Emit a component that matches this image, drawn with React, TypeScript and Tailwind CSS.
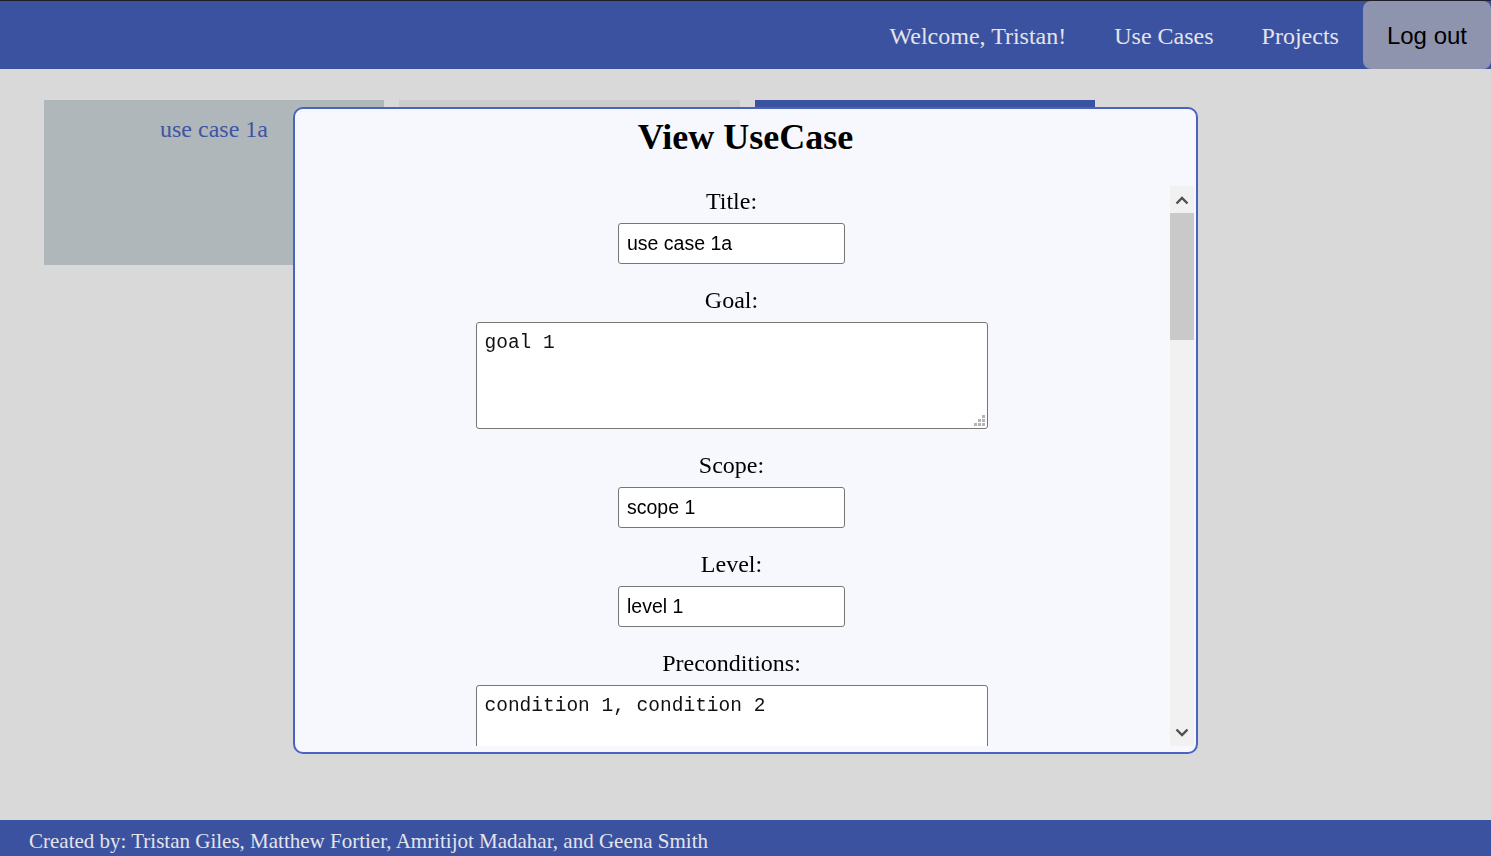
const serif = { fontFamily: '"Liberation Serif", "Times New Roman", serif' }
const sans = { fontFamily: '"Liberation Sans", Arial, sans-serif' }

interface Field {
  label: string
  value: string
  kind: 'input' | 'textarea'
}

const FIELDS: Field[] = [
  { label: 'Title:', value: 'use case 1a', kind: 'input' },
  { label: 'Goal:', value: 'goal 1', kind: 'textarea' },
  { label: 'Scope:', value: 'scope 1', kind: 'input' },
  { label: 'Level:', value: 'level 1', kind: 'input' },
  { label: 'Preconditions:', value: 'condition 1, condition 2', kind: 'textarea' },
]

function Chevron({ up }: { up?: boolean }) {
  return (
    <svg width="14" height="9" viewBox="0 0 14 9" className="block">
      <polyline
        points={up ? '1.5,7.5 7,2 12.5,7.5' : '1.5,1.5 7,7 12.5,1.5'}
        fill="none"
        stroke="#505050"
        strokeWidth="2.4"
      />
    </svg>
  )
}

// dotted resize grip like the one in the screenshot
function Grip() {
  const dots = [
    [8, 0],
    [4, 4], [8, 4],
    [0, 8], [4, 8], [8, 8],
  ]
  return (
    <svg width="11" height="11" viewBox="0 0 11 11" className="absolute right-[3px] bottom-[3px]">
      {dots.map(([x, y]) => (
        <rect key={`${x}-${y}`} x={x} y={y} width="3" height="3" fill="#b4b4b4" />
      ))}
    </svg>
  )
}

function Header() {
  return (
    <header className="h-[69px] shrink-0 bg-[#3b52a0] border-t border-[#1e1e2a] flex justify-end items-stretch">
      <nav className="flex items-stretch text-[24px] text-[#e4e4ea]" style={serif}>
        <a className="px-6 flex items-center pt-[1px]">Welcome, Tristan!</a>
        <a className="px-6 flex items-center pt-[1px]">Use Cases</a>
        <a className="px-6 flex items-center pt-[1px]">Projects</a>
        <button className="px-6 flex items-center bg-[#8e94ae] rounded-[8px] text-black text-[24px] pt-[1px]" style={sans}>
          Log out
        </button>
      </nav>
    </header>
  )
}

function Cards() {
  return (
    <div className="flex gap-[15px] pl-[44px] pt-[31px]">
      <div className="w-[340px] h-[165px] bg-[#b0b7ba] pt-[11px] text-center text-[24px] text-[#3f55a3]" style={serif}>
        use case 1a
      </div>
      <div className="w-[341px] h-[165px] bg-[#cccccc]" />
      <div className="w-[340px] h-[165px] bg-[#3b52a0]" />
    </div>
  )
}

function FieldRow({ field, first }: { field: Field; first: boolean }) {
  return (
    <div className={`flex flex-col items-center ${first ? 'pt-[2px]' : 'pt-[23px]'}`}>
      <label className="h-[26px] leading-[26px] text-[24px] text-black" style={serif}>
        {field.label}
      </label>
      {field.kind === 'input' ? (
        <input
          readOnly
          value={field.value}
          className="mt-[9px] w-[227px] h-[41px] bg-white border border-[#767676] rounded-[3px] px-[8px] text-[19.5px] text-black outline-none"
          style={sans}
        />
      ) : (
        <div className="relative mt-[9px] w-[512px] h-[107px]">
          <textarea
            readOnly
            value={field.value}
            className="w-full h-full resize-none bg-white border border-[#767676] rounded-[3px] px-[8px] pt-[6px] text-[19.5px] text-[#111] outline-none block"
            style={{ fontFamily: '"Liberation Mono", "Courier New", monospace' }}
          />
          <Grip />
        </div>
      )}
    </div>
  )
}

function Modal() {
  return (
    <div className="fixed left-[293px] top-[107px] w-[905px] h-[647px] bg-[#f7f8fd] border-2 border-[#4a62c0] rounded-[10px] flex flex-col pb-[6px]">
      <h2 className="pt-[8px] h-[49px] leading-[41px] text-center text-[36px] font-bold text-black" style={serif}>
        View UseCase
      </h2>
      <div className="mt-[28px] flex-1 flex min-h-0 pr-[2px]">
        <div className="flex-1 overflow-hidden pr-[2px]">
          {FIELDS.map((f, i) => (
            <FieldRow key={f.label} field={f} first={i === 0} />
          ))}
        </div>
        <div className="w-[24px] bg-[#f1f1f1] flex flex-col">
          <div className="h-[27px] flex items-center justify-center pt-[1px]">
            <Chevron up />
          </div>
          <div className="h-[127px] bg-[#c9c9c9]" />
          <div className="flex-1" />
          <div className="h-[27px] flex items-center justify-center pb-[1px]">
            <Chevron />
          </div>
        </div>
      </div>
    </div>
  )
}

function Footer() {
  return (
    <footer className="h-[36px] shrink-0 bg-[#3b52a0] flex items-center pl-[29px] pt-[5px] text-[21px] leading-[24px] text-[#e4e4ea] whitespace-nowrap" style={serif}>
      Created by: Tristan Giles, Matthew Fortier, Amritijot Madahar, and Geena Smith
    </footer>
  )
}

export default function App() {
  return (
    <div className="h-screen flex flex-col bg-[#d9d9d9] overflow-hidden">
      <Header />
      <main className="flex-1">
        <Cards />
      </main>
      <Footer />
      <Modal />
    </div>
  )
}
